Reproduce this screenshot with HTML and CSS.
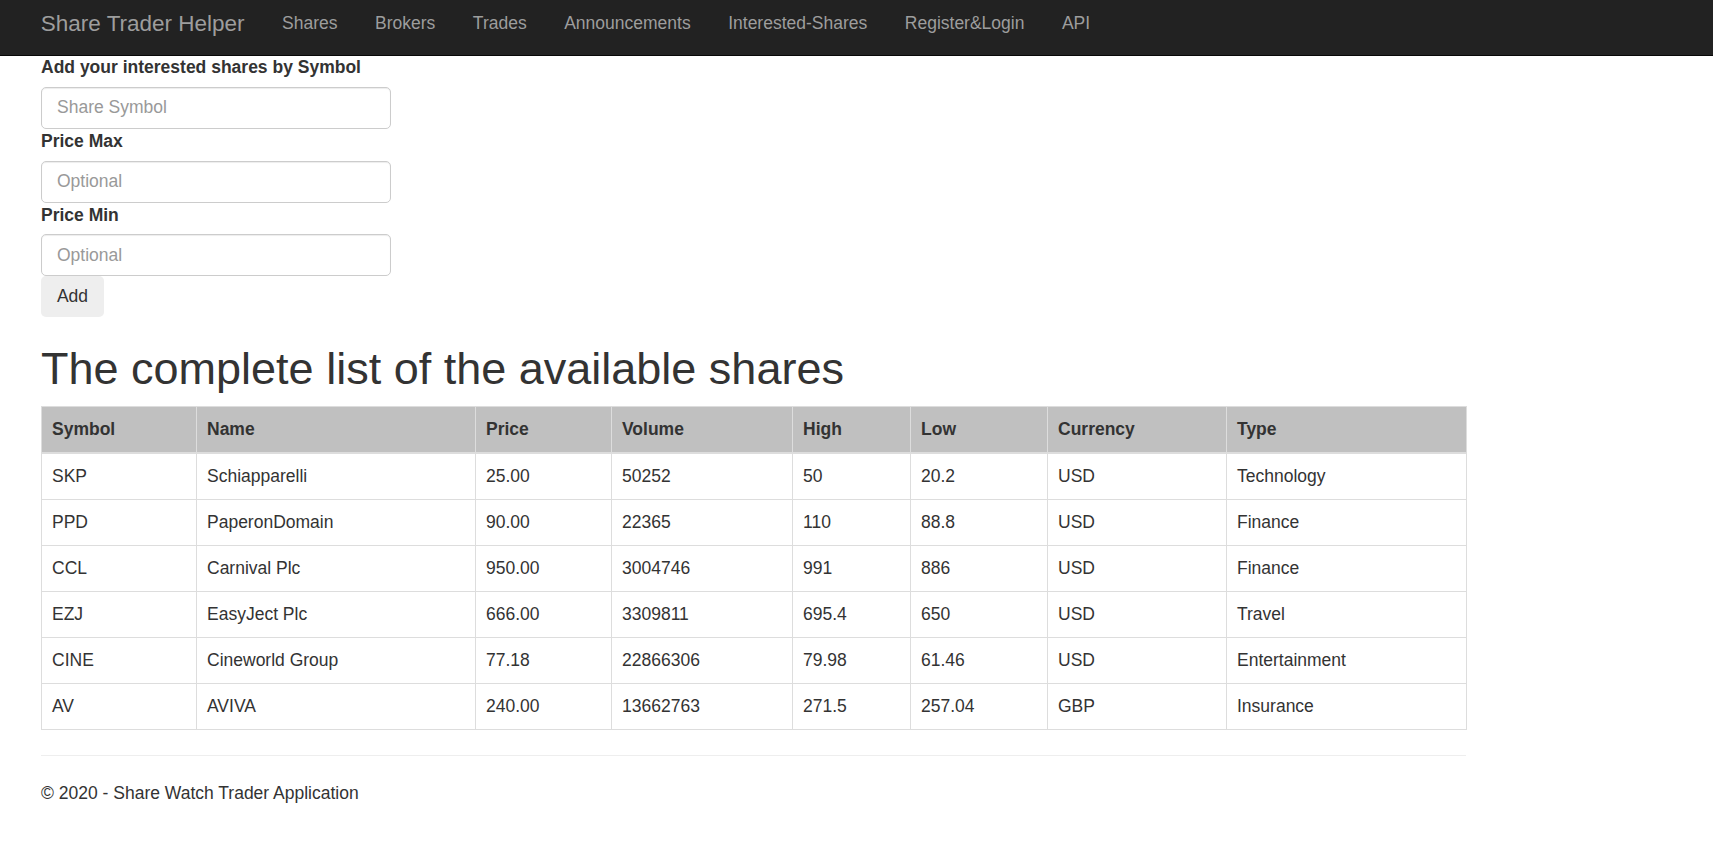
FILE: index.html
```html
<!DOCTYPE html>
<html lang="en">
<head>
<meta charset="utf-8">
<title>Share Trader Helper</title>
<link rel="stylesheet" href="styles.css">
</head>
<body>
<nav class="navbar">
  <a class="brand" href="#">Share Trader Helper</a>
  <ul class="nav-links">
    <li><a href="#">Shares</a></li>
    <li><a href="#">Brokers</a></li>
    <li><a href="#">Trades</a></li>
    <li><a href="#">Announcements</a></li>
    <li><a href="#">Interested-Shares</a></li>
    <li><a href="#">Register&amp;Login</a></li>
    <li><a href="#">API</a></li>
  </ul>
</nav>
<main class="content">
  <form class="add-form">
    <label class="field-label" for="sym">Add your interested shares by Symbol</label>
    <input class="field-input" id="sym" type="text" placeholder="Share Symbol">
    <label class="field-label" for="pmax">Price Max</label>
    <input class="field-input" id="pmax" type="text" placeholder="Optional">
    <label class="field-label" for="pmin">Price Min</label>
    <input class="field-input" id="pmin" type="text" placeholder="Optional">
    <button class="btn" type="button">Add</button>
  </form>
  <h1 class="title">The complete list of the available shares</h1>
  <table class="shares">
    <thead>
      <tr><th>Symbol</th><th>Name</th><th>Price</th><th>Volume</th><th>High</th><th>Low</th><th>Currency</th><th>Type</th></tr>
    </thead>
    <tbody>
      <tr><td>SKP</td><td>Schiapparelli</td><td>25.00</td><td>50252</td><td>50</td><td>20.2</td><td>USD</td><td>Technology</td></tr>
      <tr><td>PPD</td><td>PaperonDomain</td><td>90.00</td><td>22365</td><td>110</td><td>88.8</td><td>USD</td><td>Finance</td></tr>
      <tr><td>CCL</td><td>Carnival Plc</td><td>950.00</td><td>3004746</td><td>991</td><td>886</td><td>USD</td><td>Finance</td></tr>
      <tr><td>EZJ</td><td>EasyJect Plc</td><td>666.00</td><td>3309811</td><td>695.4</td><td>650</td><td>USD</td><td>Travel</td></tr>
      <tr><td>CINE</td><td>Cineworld Group</td><td>77.18</td><td>22866306</td><td>79.98</td><td>61.46</td><td>USD</td><td>Entertainment</td></tr>
      <tr><td>AV</td><td>AVIVA</td><td>240.00</td><td>13662763</td><td>271.5</td><td>257.04</td><td>GBP</td><td>Insurance</td></tr>
    </tbody>
  </table>
  <hr class="rule">
  <footer class="footer">
    <p>&copy; 2020 - Share Watch Trader Application</p>
  </footer>
</main>
</body>
</html>
```
FILE: styles.css
```css
* { box-sizing: border-box; }
html, body {
  margin: 0;
  padding: 0;
  background: #fff;
}
body {
  font-family: "Liberation Sans", Arial, Helvetica, sans-serif;
  font-size: 17.5px;
  line-height: 25px;
  color: #333;
}
.navbar {
  display: flex;
  align-items: flex-start;
  height: 56px;
  background: #222;
  border-bottom: 1px solid #080808;
  padding-left: 22px;
}
.brand {
  display: block;
  padding: 11px 18.75px 0;
  font-size: 22.5px;
  line-height: 25px;
  color: #9d9d9d;
  text-decoration: none;
}
.nav-links {
  display: flex;
  list-style: none;
  margin: 0;
  padding: 0;
}
.nav-links a {
  display: block;
  padding: 10.5px 18.75px 0;
  font-size: 17.5px;
  line-height: 25px;
  color: #9d9d9d;
  text-decoration: none;
}
.content {
  padding-left: 41px;
  width: 1466px;
}
.add-form {
  display: flex;
  flex-direction: column;
  align-items: flex-start;
  margin-top: -1px;
}
.field-label {
  display: block;
  font-weight: bold;
  line-height: 25px;
  margin-bottom: 6.75px;
}
.field-input {
  display: block;
  width: 350px;
  height: 42px;
  padding: 7.5px 15px;
  font-family: inherit;
  font-size: 17.5px;
  line-height: 25px;
  color: #555;
  background: #fff;
  border: 1px solid #ccc;
  border-radius: 5px;
  box-shadow: inset 0 1px 1px rgba(0,0,0,.075);
  margin: 0;
}
.field-input::placeholder { color: #999; }
.btn {
  display: block;
  height: 41px;
  width: 63px;
  padding: 0;
  font-family: inherit;
  font-size: 17.5px;
  color: #333;
  background: #eee;
  border: none;
  border-radius: 5px;
  margin: 0;
}
.title {
  margin: 26.5px 0 12.5px;
  font-size: 45px;
  font-weight: 500;
  line-height: 49.5px;
  color: #333;
}
.shares {
  width: 1425px;
  table-layout: fixed;
  border-collapse: collapse;
  border: 1px solid #ddd;
}
.shares th, .shares td {
  padding: 10px;
  line-height: 25px;
  text-align: left;
  border: 1px solid #ddd;
  vertical-align: top;
}
.shares th {
  background: #c0c0c0;
  font-weight: bold;
  border-bottom: 2px solid #ddd;
}
.shares th:nth-child(1) { width: 155px; }
.shares th:nth-child(2) { width: 279px; }
.shares th:nth-child(3) { width: 136px; }
.shares th:nth-child(4) { width: 181px; }
.shares th:nth-child(5) { width: 118px; }
.shares th:nth-child(6) { width: 137px; }
.shares th:nth-child(7) { width: 179px; }
.shares th:nth-child(8) { width: 240px; }
.rule {
  width: 1425px;
  margin: 25px 0;
  border: 0;
  border-top: 1px solid #eee;
}
.footer p { margin: 0; }
```
